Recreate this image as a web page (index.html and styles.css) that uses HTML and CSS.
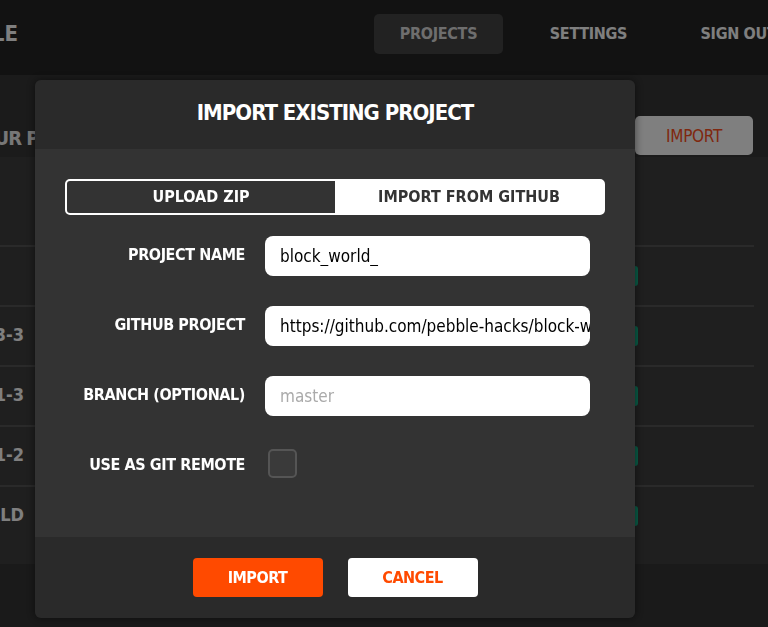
FILE: index.html
```html
<!DOCTYPE html>
<html lang="en">
<head>
    <meta charset="UTF-8">
    <meta name="viewport" content="width=device-width, initial-scale=1.0">
    <title>CloudPebble - Projects</title>
    <link rel="stylesheet" href="styles.css">
</head>
<body>
    <div class="page">
        <div class="top-bar">
            <div class="logo"><span>CLOUDPEBBLE</span></div>
            <ul class="nav">
                <li class="nav-item active">PROJECTS</li>
                <li class="nav-item">SETTINGS</li>
                <li class="nav-item">SIGN OUT</li>
            </ul>
        </div>

        <div class="projects-head">
            <div class="projects-title"><span>YOUR PROJECTS</span></div>
            <button class="head-button">IMPORT</button>
        </div>

        <div class="project-table">
            <div class="table-head"></div>
            <div class="project-row"><span class="project-name"></span><span class="status-pill"></span></div>
            <div class="project-row"><span class="project-name">RABBIT-3-3</span><span class="status-pill"></span></div>
            <div class="project-row"><span class="project-name">RABBIT-1-3</span><span class="status-pill"></span></div>
            <div class="project-row"><span class="project-name">RABBIT-1-2</span><span class="status-pill"></span></div>
            <div class="project-row"><span class="project-name">HELLO WORLD</span><span class="status-pill"></span></div>
        </div>
    </div>

    <div class="overlay">
        <div class="modal">
            <div class="modal-header">IMPORT EXISTING PROJECT</div>
            <div class="modal-body">
                <div class="source-toggle">
                    <div class="toggle-option selected">UPLOAD ZIP</div>
                    <div class="toggle-option">IMPORT FROM GITHUB</div>
                </div>
                <div class="form-row">
                    <label class="field-label" for="projectName">PROJECT NAME</label>
                    <input class="field-input" type="text" id="projectName" value="block_world_">
                </div>
                <div class="form-row">
                    <label class="field-label" for="githubProject">GITHUB PROJECT</label>
                    <input class="field-input" type="text" id="githubProject" value="https://github.com/pebble-hacks/block-world">
                </div>
                <div class="form-row">
                    <label class="field-label" for="branch">BRANCH (OPTIONAL)</label>
                    <input class="field-input" type="text" id="branch" placeholder="master">
                </div>
                <div class="form-row">
                    <label class="field-label" for="gitRemote">USE AS GIT REMOTE</label>
                    <span class="checkbox" id="gitRemote"></span>
                </div>
            </div>
            <div class="modal-footer">
                <button class="btn btn-primary">IMPORT</button>
                <button class="btn btn-secondary">CANCEL</button>
            </div>
        </div>
    </div>
</body>
</html>
```

FILE: styles.css
```css
body {
    font-family: "DejaVu Sans Condensed", "DejaVu Sans", sans-serif;
    font-stretch: condensed;
    background-color: #343434;
    margin: 0;
    padding: 0;
    width: 768px;
    height: 627px;
    overflow: hidden;
}

.page {
    width: 768px;
}

/* top navigation */
.top-bar {
    height: 75px;
    box-sizing: border-box;
    padding-top: 14px;
    background-color: #242424;
    display: flex;
    align-items: flex-start;
    justify-content: space-between;
}

.logo {
    width: 18px;
    height: 40px;
    line-height: 40px;
    display: flex;
    justify-content: flex-end;
    overflow: hidden;
    white-space: nowrap;
    color: #fff;
    font-size: 22px;
    font-weight: bold;
}

.nav {
    list-style: none;
    margin: 0 -35px 0 0;
    padding: 0;
    display: flex;
    gap: 21px;
}

.nav-item {
    width: 129px;
    height: 40px;
    line-height: 40px;
    text-align: center;
    color: #fff;
    font-size: 16px;
    font-weight: bold;
    letter-spacing: -0.3px;
    border-radius: 5px;
    white-space: nowrap;
}

.nav-item.active {
    background-color: #444;
    color: #ddd;
}

/* projects list behind the dialog */
.projects-head {
    height: 82px;
    box-sizing: border-box;
    background-color: #363636;
    display: flex;
    align-items: flex-end;
    justify-content: space-between;
    padding: 0 15px 2px 0;
}

.projects-title {
    width: 40px;
    height: 39px;
    line-height: 44px;
    overflow: hidden;
    white-space: nowrap;
    color: #eee;
    font-size: 20px;
    font-weight: bold;
    letter-spacing: -1px;
}

.projects-title span {
    margin-left: -31px;
}

.head-button {
    width: 118px;
    height: 39px;
    background-color: #fff;
    color: #ff5020;
    border: none;
    border-radius: 5px;
    font-family: inherit;
    font-stretch: condensed;
    font-size: 17px;
    letter-spacing: -0.3px;
}

.project-table {
    background-color: #3e3e3e;
    padding-right: 14px;
    padding-bottom: 19px;
}

.table-head {
    height: 88px;
}

.project-row {
    height: 60px;
    border-top: 2px solid #545454;
    box-sizing: border-box;
    display: flex;
    align-items: center;
    justify-content: space-between;
}

.project-name {
    width: 24px;
    display: flex;
    justify-content: flex-end;
    overflow: hidden;
    white-space: nowrap;
    color: #fff;
    font-size: 18px;
    font-weight: bold;
    margin-top: -3px;
}

.status-pill {
    width: 60px;
    height: 20px;
    background-color: #14b48a;
    border-radius: 3px;
    margin-right: 116px;
}

/* import dialog */
.overlay {
    position: fixed;
    top: 0;
    left: 0;
    right: 0;
    bottom: 0;
    background-color: rgba(0, 0, 0, 0.5);
    padding: 80px 0 0 35px;
}

.modal {
    width: 600px;
    border-radius: 6px;
    overflow: hidden;
    box-shadow: 0 0 8px rgba(0, 0, 0, 0.5);
}

.modal-header {
    height: 69px;
    background-color: #2a2a2a;
    color: #fff;
    font-size: 22px;
    font-weight: bold;
    letter-spacing: -1px;
    text-align: center;
    line-height: 66px;
}

.modal-body {
    background-color: #333;
    padding: 30px 30px 51px 30px;
    display: flex;
    flex-direction: column;
    gap: 30px;
}

.source-toggle {
    display: flex;
    height: 36px;
    border: 2px solid #fff;
    border-radius: 5px;
    box-sizing: border-box;
    background-color: #fff;
    overflow: hidden;
    margin-bottom: -9px;
}

.toggle-option {
    flex: 1;
    text-align: center;
    line-height: 32px;
    font-size: 16px;
    font-weight: bold;
    color: #333;
}

.toggle-option.selected {
    background-color: #333;
    color: #fff;
}

.form-row {
    display: flex;
    align-items: center;
    gap: 20px;
    height: 40px;
}

.field-label {
    width: 180px;
    text-align: right;
    color: #fff;
    font-size: 16px;
    font-weight: bold;
    letter-spacing: -0.4px;
    white-space: nowrap;
    margin-top: -3px;
}

.field-input {
    width: 325px;
    height: 40px;
    box-sizing: border-box;
    border: none;
    border-radius: 8px;
    padding: 0 0 0 15px;
    font-family: inherit;
    font-stretch: condensed;
    font-size: 17px;
    color: #000;
    background-color: #fff;
    outline: none;
}

.field-input::placeholder {
    color: #aaa;
}

.checkbox {
    width: 29px;
    height: 29px;
    box-sizing: border-box;
    margin: 0 0 5px 3px;
    border: 2px solid #555;
    border-radius: 5px;
    background-color: #3a3a3a;
}

.modal-footer {
    height: 81px;
    background-color: #2a2a2a;
    display: flex;
    align-items: center;
    justify-content: center;
    gap: 25px;
}

.btn {
    width: 130px;
    height: 39px;
    border: none;
    border-radius: 4px;
    font-family: inherit;
    font-stretch: condensed;
    font-size: 16px;
    font-weight: bold;
    letter-spacing: -0.5px;
    cursor: pointer;
}

.btn-primary {
    background-color: #ff4a00;
    color: #fff;
}

.btn-secondary {
    background-color: #fff;
    color: #ff4a00;
}
```
